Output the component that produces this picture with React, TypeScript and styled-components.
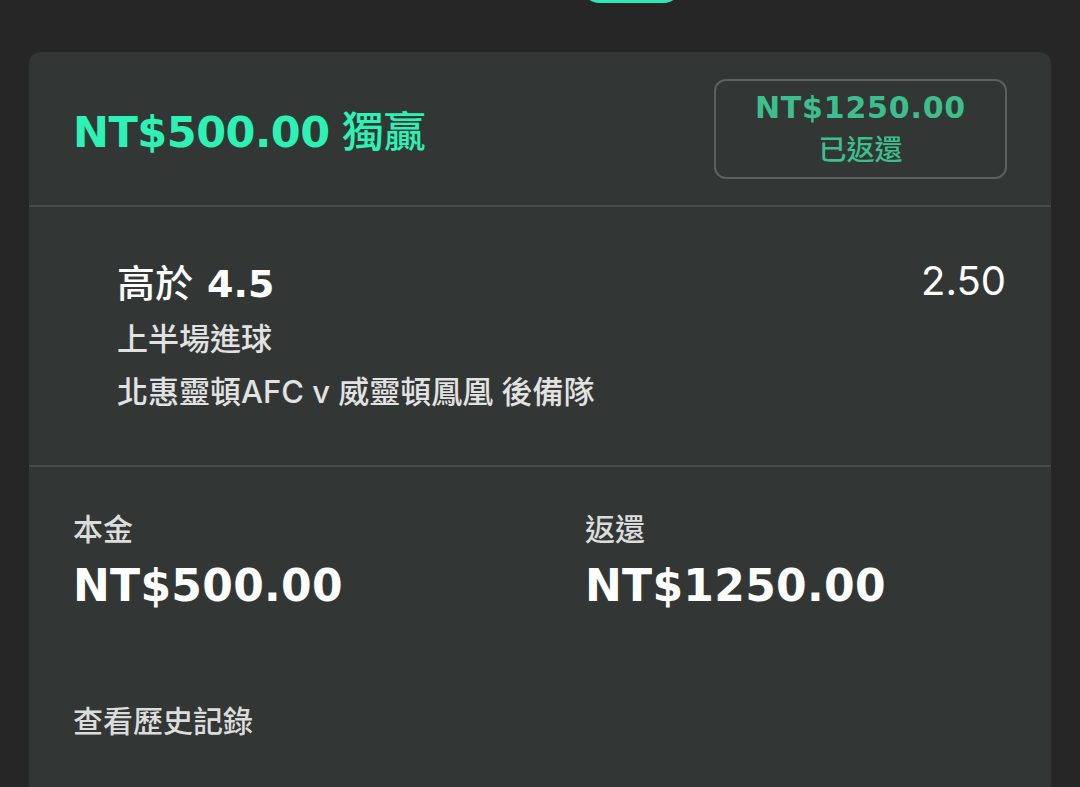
import styled, { createGlobalStyle } from "styled-components";

const GlobalStyle = createGlobalStyle`
    html, body {
        margin: 0;
        padding: 0;
        background: #262626;
    }
    * {
        box-sizing: border-box;
    }
`;

const CJK = `"Noto Sans CJK TC", "Noto Sans CJK SC", sans-serif`;

export const Page = styled.div`
    min-height: 787px;
    background: #262626;
    padding: 0 29px;
    overflow: hidden;
`;

export const TopBar = styled.div`
    height: 52px;
    display: flex;
    align-items: flex-start;
    padding-left: 551px;
`;

export const TabPill = styled.div`
    width: 103px;
    height: 40px;
    margin-top: -37px;
    background: #2de8b0;
    border-radius: 20px;
`;

export const Card = styled.div`
    background: #323735;
    border-radius: 12px;
    overflow: hidden;
`;

export const Header = styled.div`
    height: 155px;
    display: flex;
    align-items: center;
    justify-content: space-between;
    padding: 0 44px;
    border-bottom: 2px solid #474c4a;
`;

export const Title = styled.div`
    display: flex;
    align-items: baseline;
    color: #2df2b5;
    gap: 12px;
`;

export const TitleAmount = styled.span`
    font-family: "DejaVu Sans", ${CJK};
    font-weight: 700;
    font-size: 43px;
    letter-spacing: -0.5px;
`;

export const TitleType = styled.span`
    font-family: ${CJK};
    font-weight: 500;
    font-size: 42px;
`;

export const ReturnBadge = styled.div`
    border: 2px solid #5c605e;
    border-radius: 12px;
    padding: 10px 39px;
    display: flex;
    flex-direction: column;
    align-items: center;
    color: #3cbf8c;
`;

export const BadgeAmount = styled.div`
    font-family: "DejaVu Sans", ${CJK};
    font-weight: 700;
    font-size: 30px;
    line-height: 34px;
    letter-spacing: 0.8px;
`;

export const BadgeLabel = styled.div`
    margin-top: 4px;
    font-family: ${CJK};
    font-weight: 500;
    font-size: 28px;
    line-height: 38px;
`;

export const Selection = styled.div`
    padding: 49px 45px 47px 88px;
    border-bottom: 2px solid #474c4a;
`;

export const SelectionTop = styled.div`
    display: flex;
    justify-content: space-between;
    align-items: center;
    height: 48px;
    margin-bottom: 8px;
`;

export const Pick = styled.div`
    display: flex;
    align-items: baseline;
    gap: 14px;
    color: #ffffff;
`;

export const PickName = styled.span`
    font-family: ${CJK};
    font-size: 38px;
    font-weight: 500;
`;

export const PickLine = styled.span`
    font-family: "DejaVu Sans", sans-serif;
    font-weight: 700;
    font-size: 38px;
`;

export const Odds = styled.div`
    font-family: "Inter", sans-serif;
    font-size: 40px;
    font-weight: 400;
    color: #ffffff;
`;

export const InfoLine = styled.div`
    font-family: "Inter", ${CJK};
    font-size: 31px;
    font-weight: 500;
    line-height: 53px;
    color: #e2e2e2;
`;

export const Summary = styled.div`
    padding: 40px 44px 70px;
`;

export const Totals = styled.div`
    display: grid;
    grid-template-columns: 512px 1fr;
`;

export const TotalLabel = styled.div`
    font-family: ${CJK};
    font-size: 30px;
    font-weight: 500;
    line-height: 40px;
    color: #dcdcdc;
`;

export const TotalValue = styled.div`
    margin-top: 11px;
    font-family: "DejaVu Sans", sans-serif;
    font-weight: 700;
    font-size: 44px;
    line-height: 56px;
    letter-spacing: 0.3px;
    color: #ffffff;
`;

export const HistoryLink = styled.div`
    margin-top: 85px;
    font-family: ${CJK};
    font-size: 30px;
    font-weight: 500;
    line-height: 40px;
    color: #dcdcdc;
`;

const Total = ({ label, value }: { label: string; value: string }) => (
    <div>
        <TotalLabel>{label}</TotalLabel>
        <TotalValue>{value}</TotalValue>
    </div>
);

export default function App() {
    return (
        <Page>
            <GlobalStyle />
            <TopBar>
                <TabPill />
            </TopBar>
            <Card>
                <Header>
                    <Title>
                        <TitleAmount>NT$500.00</TitleAmount>
                        <TitleType>獨贏</TitleType>
                    </Title>
                    <ReturnBadge>
                        <BadgeAmount>NT$1250.00</BadgeAmount>
                        <BadgeLabel>已返還</BadgeLabel>
                    </ReturnBadge>
                </Header>
                <Selection>
                    <SelectionTop>
                        <Pick>
                            <PickName>高於</PickName>
                            <PickLine>4.5</PickLine>
                        </Pick>
                        <Odds>2.50</Odds>
                    </SelectionTop>
                    <InfoLine>上半場進球</InfoLine>
                    <InfoLine>北惠靈頓AFC v 威靈頓鳳凰 後備隊</InfoLine>
                </Selection>
                <Summary>
                    <Totals>
                        <Total label="本金" value="NT$500.00" />
                        <Total label="返還" value="NT$1250.00" />
                    </Totals>
                    <HistoryLink>查看歷史記錄</HistoryLink>
                </Summary>
            </Card>
        </Page>
    );
}
